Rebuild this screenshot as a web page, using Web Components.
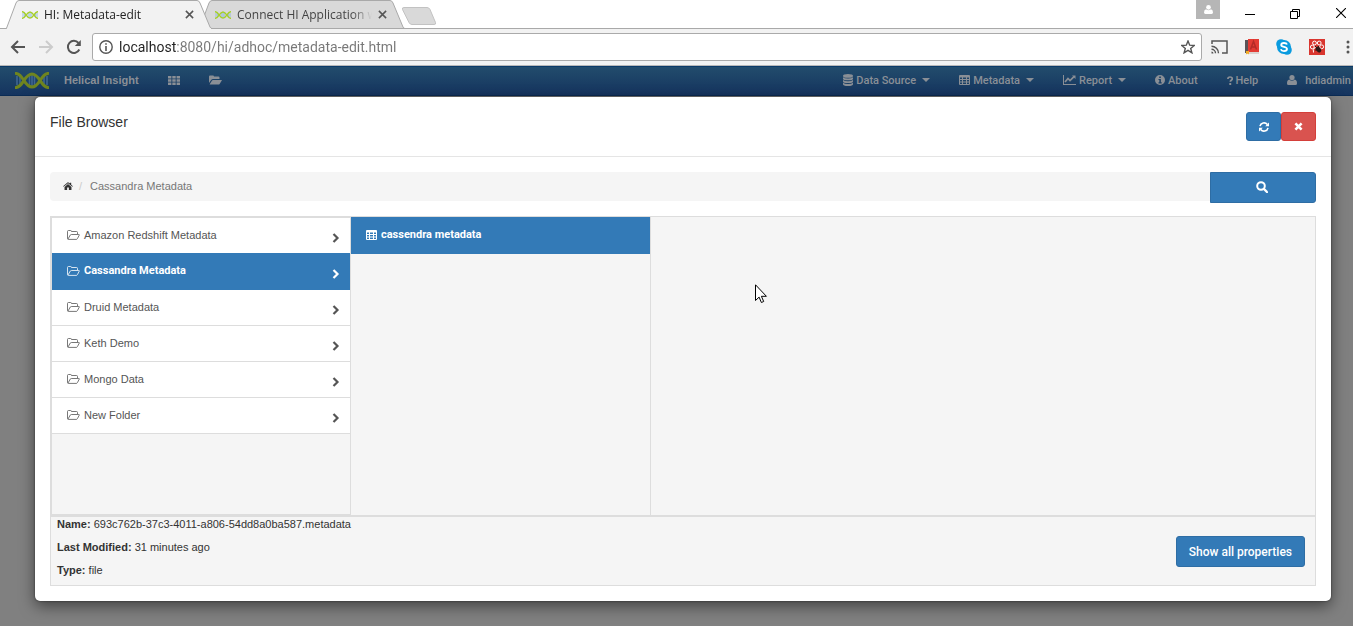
<!DOCTYPE html>
<html lang="en">
<head>
<meta charset="utf-8">
<title>HI: Metadata-edit</title>
<style>
  body {
    margin: 0;
    min-height: 100vh;
    background: #808080;
    font-family: "Liberation Sans", Arial, sans-serif;
    font-size: 11px;
    color: #333;
    display: flex;
    flex-direction: column;
    overflow: hidden;
  }
</style>
</head>
<body>
<browser-window>
  <browser-tab slot="tabs" active icon="dna">HI: Metadata-edit</browser-tab>
  <browser-tab slot="tabs" icon="dna">Connect HI Application with Cassandra</browser-tab>
</browser-window>
<app-navbar>
  <nav-item icon="database" caret>Data Source</nav-item>
  <nav-item icon="table" caret>Metadata</nav-item>
  <nav-item icon="chart" caret>Report</nav-item>
  <nav-item icon="info">About</nav-item>
  <nav-item icon="question">Help</nav-item>
  <nav-item icon="user" wide>hdiadmin</nav-item>
</app-navbar>
<file-browser heading="File Browser">
  <path-bar slot="path">Cassandra Metadata</path-bar>
  <file-column slot="columns" framed>
    <file-item icon="folder" arrow>Amazon Redshift Metadata</file-item>
    <file-item icon="folder" arrow selected>Cassandra Metadata</file-item>
    <file-item icon="folder" arrow>Druid Metadata</file-item>
    <file-item icon="folder" arrow>Keth Demo</file-item>
    <file-item icon="folder" arrow>Mongo Data</file-item>
    <file-item icon="folder" arrow>New Folder</file-item>
  </file-column>
  <file-column slot="columns">
    <file-item icon="table" selected>cassendra metadata</file-item>
  </file-column>
  <file-details slot="details" name="693c762b-37c3-4011-a806-54dd8a0ba587.metadata" modified="31 minutes ago" type="file"></file-details>
</file-browser>
<mouse-pointer></mouse-pointer>

<script>
  const ICONS = {
    dna: ['0 0 34 17', `
      <path d="M2 4v9M5 5v7M14.500 4v9M17 3v11M19.500 4v9M29 5v7M32 4v9" stroke="var(--rung, #8ab6dd)" stroke-width="1.600" fill="none"/>
      <path d="M0 1.500c8-1 9 13.500 17 13.500S26 .5 34 1.500" stroke="var(--strand, #a6cf2a)" stroke-width="3" fill="none"/>
      <path d="M0 15.500c8 1 9-13.500 17-13.500s9 14.500 17 13.500" stroke="var(--strand, #a6cf2a)" stroke-width="3" fill="none"/>`],
    grid: ['0 0 12 9', '<path d="M0 0h3.400v2.500H0zM4.300 0h3.400v2.500H4.300zM8.600 0H12v2.500H8.600zM0 3.200h3.400v2.600H0zM4.300 3.200h3.400v2.600H4.300zM8.600 3.200H12v2.600H8.600zM0 6.500h3.400V9H0zM4.300 6.500h3.400V9H4.300zM8.600 6.500H12V9H8.600z"/>'],
    folderOpen: ['0 0 13 10', '<path d="M0 8V1.5Q0 .5 1 .5h3q1 0 1 1h4.500q1 0 1 1V4H4Q3 4 2.300 4.800zM.6 9.500L3 5.600Q3.400 5 4 5h8.500q.7 0 .3.600L10.600 9q-.4.600-1.200.600z"/>'],
    database: ['0 0 10 12', '<ellipse cx="5" cy="1.900" rx="5" ry="1.900"/><path d="M0 3.200q1.500 1.300 5 1.300t5-1.300v1.500q0 1.600-5 1.600t-5-1.600zM0 6q1.500 1.300 5 1.300T10 6v1.500q0 1.600-5 1.600T0 7.500zM0 8.800q1.500 1.300 5 1.300t5-1.300v1.400q0 1.800-5 1.800t-5-1.800z"/>'],
    table: ['0 0 11 10', '<path fill-rule="evenodd" d="M1 0h9q1 0 1 1v8q0 1-1 1H1q-1 0-1-1V1q0-1 1-1zM1 2.500v1.500h2V2.500zM4 2.500v1.500h3V2.500zM8 2.500v1.500h2V2.500zM1 5v1.500h2V5zM4 5v1.500h3V5zM8 5v1.500h2V5zM1 7.500V9h2V7.500zM4 7.500V9h3V7.500zM8 7.500V9h2V7.500z"/>'],
    chart: ['0 0 13 10', '<path d="M0 0h1v9h12v1H0z"/><path d="M2 7l3-3.500 2 2L11 1.600" fill="none" stroke="currentColor" stroke-width="1.700"/><path d="M9 .5h3.500V4z"/>'],
    info: ['0 0 10 10', '<path fill-rule="evenodd" d="M5 0a5 5 0 1 0 0 10A5 5 0 1 0 5 0zM4.200 1.400h1.700v1.500H4.200zM3.500 3.900h2.400v3.300h.8v1.200H3.500V7.200h.8V5h-.8z"/>'],
    question: ['0 0 6 9', '<path d="M.9 3q0-2 2.200-2t2.200 1.700c0 1.500-2 1.500-2 3" fill="none" stroke="currentColor" stroke-width="1.700"/><path d="M2.300 7h1.900v2H2.300z"/>'],
    user: ['0 0 10 10', '<circle cx="5" cy="2.600" r="2.600"/><path d="M2.300 4.600Q5 7 7.700 4.600 10 5 10 8.400 10 10 8.500 10h-7Q0 10 0 8.400 0 5 2.300 4.600z"/>'],
    home: ['0 0 11 9', '<path d="M0 4.700L4.900.500q.6-.5 1.200 0L7.500 1.700V.8h1.600V3L11 4.700l-.6.700-4.900-4-4.900 4z"/><path d="M5.500 2.300L9.400 5.500V9H6.500V6.200h-2V9H1.600V5.500z"/>'],
    folder: ['0 0 13 10', '<path d="M.5 8.500v-7q0-1 1-1h2q1 0 1 1h5q1 0 1 1V4M1 9L3.300 5Q3.700 4.500 4.300 4.500h7.500q.8 0 .4.700L10.500 8.500q-.4.900-1.200.9H1.300q-.8 0-.8-.9" fill="none" stroke="currentColor" stroke-width=".8"/>'],
    refresh: ['0 0 10 10', '<path d="M1 4.200A4.100 4.100 0 0 1 8.300 2.500M9 5.800A4.100 4.100 0 0 1 1.700 7.500" fill="none" stroke="currentColor" stroke-width="1.600"/><path d="M10 .5v3.800H6.200zM0 9.500V5.700h3.800z"/>'],
    times: ['0 0 9 9', '<path d="M1.400 1.400l6.200 6.200M7.600 1.400L1.400 7.600" stroke="currentColor" stroke-width="2.600"/>'],
    search: ['0 0 12 12', '<circle cx="5" cy="5" r="3.800" fill="none" stroke="currentColor" stroke-width="2"/><path d="M8 8l3 3" stroke="currentColor" stroke-width="2.400" stroke-linecap="round"/>'],
    chevron: ['0 0 8 10', '<path d="M1.500 1l4 4-4 4" fill="none" stroke="currentColor" stroke-width="2.200"/>'],
    close: ['0 0 10 10', '<path d="M1 1l8 8M9 1L1 9" stroke="currentColor" stroke-width="1.700"/>'],
    back: ['0 0 16 14', '<path d="M15 7H2M8 1L2 7l6 6" fill="none" stroke="currentColor" stroke-width="2"/>'],
    forward: ['0 0 16 14', '<path d="M1 7h13M8 1l6 6-6 6" fill="none" stroke="currentColor" stroke-width="2"/>'],
    reload: ['0 0 16 16', '<path d="M13.300 10.500A6 6 0 1 1 12.500 4" fill="none" stroke="currentColor" stroke-width="2"/><path d="M14.800 1v6h-6z"/>'],
    site: ['0 0 14 14', '<circle cx="7" cy="7" r="6.200" fill="none" stroke="currentColor" stroke-width="1.400"/><path d="M6.200 3.200h1.600v1.600H6.200zM6.200 6h1.600v5H6.200z"/>'],
    star: ['0 0 14 14', '<path d="M7 1l1.700 4.200 4.500.3-3.500 2.900 1.200 4.400L7 10.400l-3.900 2.400 1.200-4.400L.8 5.500l4.500-.3z" fill="none" stroke="currentColor" stroke-width="1.400"/>'],
    cast: ['0 0 17 14', '<path d="M1 4V1h15v12h-5" fill="none" stroke="currentColor" stroke-width="1.500"/><path d="M.5 6.200a7 7 0 0 1 7 7M.5 9.200a4 4 0 0 1 4 4" fill="none" stroke="currentColor" stroke-width="1.400"/><path d="M.5 11.500a2 2 0 0 1 2 2h-2z"/>'],
    book: ['0 0 14 16', '<path d="M0 1h3v13H0z" fill="#5b5357"/><path d="M3 0h11v13H3z" fill="#e33b34"/><path d="M5.500 10.500l3-8 3 8M6.800 8h3.500" fill="none" stroke="#b42b28" stroke-width="1.500"/><path d="M1 13h13v2H1z" fill="#d9d2cf"/><path d="M1 12h3v3.500l-1.500-1L1 15.500z" fill="#f2ad26"/>'],
    skype: ['0 0 16 16', '<circle cx="5" cy="5" r="4.800" fill="#0a9bdf"/><circle cx="11" cy="11" r="4.800" fill="#0a9bdf"/><circle cx="8" cy="8" r="7" fill="#0a9bdf"/><path d="M11 5.600Q10.500 4 8 4 5.200 4 5.200 6q0 1.300 2.800 1.900 3 .6 3 2.200 0 2-3 2-2.600 0-3.200-1.800" fill="none" stroke="#fff" stroke-width="1.800"/>'],
    paw: ['0 0 16 16', '<path d="M0 0h16v16H0z" fill="#d9362f"/><circle cx="5.500" cy="4" r="1.900" fill="none" stroke="#fff"/><circle cx="10.200" cy="4" r="1.900" fill="none" stroke="#fff"/><circle cx="3.300" cy="8" r="1.900" fill="none" stroke="#fff"/><circle cx="12.700" cy="7.800" r="1.900" fill="none" stroke="#fff"/><path d="M4.500 13.500q-1.500-3 2-5.500" fill="none" stroke="#fff"/><ellipse cx="9.500" cy="10.500" rx="2.200" ry="3.200" transform="rotate(-40 9.500 10.500)" fill="#2b1a18"/><path d="M6 7l3 3M6 11h3M9.500 7v3" stroke="#2b1a18"/>'],
    dots: ['0 0 4 14', '<circle cx="2" cy="2" r="1.500"/><circle cx="2" cy="7" r="1.500"/><circle cx="2" cy="12" r="1.500"/>'],
    minimize: ['0 0 10 11', '<path d="M0 6h10v1H0z"/>'],
    restore: ['0 0 10 11', '<path d="M.5 3.500h7v7h-7zM2.500 3V1.500h7v7H8" fill="none" stroke="currentColor"/>'],
    exit: ['0 0 10 10', '<path d="M0 0l10 10M10 0L0 10" stroke="currentColor" stroke-width="1.100"/>'],
  };

  class UiElement extends HTMLElement {
    connectedCallback() {
      if (this.shadowRoot) return;
      this.attachShadow({ mode: 'open' });
      this.shadowRoot.innerHTML = this.render();
    }
  }

  class UiIcon extends UiElement {
    render() {
      const [box, body] = ICONS[this.getAttribute('name')];
      const size = box.split(' ');
      const width = this.getAttribute('width') || size[2];
      const height = Math.round(width * size[3] / size[2]);
      return `
        <style>
          :host { display: inline-flex; flex: none; }
          svg { display: block; fill: currentColor; }
        </style>
        <svg width="${width}" height="${height}" viewBox="${box}" aria-hidden="true">${body}</svg>
      `;
    }
  }
  customElements.define('ui-icon', UiIcon);

  class BrowserTab extends UiElement {
    render() {
      return `
        <style>
          :host {
            display: flex;
            align-items: center;
            position: relative;
            box-sizing: border-box;
            width: 206px;
            height: 29px;
            margin-right: -13px;
            padding: 0 18px 0 16px;
            gap: 6px;
            color: #444;
            --body: #d9d9d9;
          }
          :host([active]) { z-index: 1; color: #222; --body: #f2f2f2; }
          .shape { position: absolute; inset: 0; width: 100%; height: 100%; z-index: -1; }
          .shape path { fill: var(--body); stroke: #a9a9a9; }
          :host([active]) .base { stroke: var(--body); }
          .title {
            flex: 1;
            overflow: hidden;
            white-space: nowrap;
            -webkit-mask-image: linear-gradient(90deg, #000 85%, transparent);
            mask-image: linear-gradient(90deg, #000 85%, transparent);
          }
          button { display: flex; border: 0; padding: 0; background: none; color: #555; }
        </style>
        <svg class="shape" viewBox="0 0 206 29" preserveAspectRatio="none">
          <path d="M0 28.500Q.500 28.500 1 27L10 3Q11 .5 13 .5h178q2 0 3 2.500l10 24q.6 1.500 2 1.500"/>
          <path class="base" d="M1 28.500h204"/>
        </svg>
        <ui-icon name="${this.getAttribute('icon')}" width="16"></ui-icon>
        <span class="title"><slot></slot></span>
        <button aria-label="Close tab"><ui-icon name="close" width="9"></ui-icon></button>
      `;
    }
  }
  customElements.define('browser-tab', BrowserTab);

  class BrowserWindow extends UiElement {
    render() {
      return `
        <style>
          :host { display: block; background: #f2f2f2; font-family: "Open Sans", sans-serif; border-bottom: 1px solid #b8b8b8; }
          button { display: flex; border: 0; padding: 0; background: none; color: inherit; }
          .strip {
            display: flex;
            justify-content: space-between;
            height: 29px;
            background: linear-gradient(#fff, #fff) 0 0 / 100% 28px no-repeat #a9a9a9;
            font-size: 12px;
          }
          .tabs { display: flex; padding-left: 6px; isolation: isolate; }
          .new { margin: 7px 0 0 9px; align-self: flex-start; }
          .controls { display: flex; color: #000; gap: 25px; padding-right: 7px; }
          .controls button { align-items: center; height: 26px; }
          .controls .person {
            width: 24px;
            height: 19px;
            justify-content: center;
            background: #b6b6b6;
            color: #fff;
          }
          .controls .restore { margin: 0 11px 0 10px; }
          .toolbar {
            display: flex;
            align-items: center;
            height: 36px;
            padding: 0 3px 0 10px;
            color: #555;
          }
          .history { display: flex; align-items: center; gap: 12px; }
          .history button:disabled { color: #ccc; }
          .extensions { display: flex; align-items: center; gap: 17px; }
          .menu { margin-left: 21px; }
          .omnibox {
            flex: 1;
            display: flex;
            align-items: center;
            gap: 6px;
            height: 26px;
            margin: 0 9px 0 10px;
            padding: 0 6px;
            border: 1px solid #aaa;
            border-radius: 3px;
            background: #fff;
          }
          input {
            flex: 1;
            border: 0;
            padding: 0;
            outline: 0;
            font: 14px Roboto, sans-serif;
            color: #777;
            background: linear-gradient(90deg, #222 57px, #777 57px);
            -webkit-background-clip: text;
            background-clip: text;
            -webkit-text-fill-color: transparent;
          }
        </style>
        <div class="strip">
          <div class="tabs">
            <slot name="tabs"></slot>
            <button class="new" aria-label="New tab">
              <svg width="36" height="18" viewBox="0 0 36 18"><path d="M3 .5h23q2 0 3 2l5.500 13q.8 2-1.500 2H11q-2 0-3-2L1.500 2.500Q.8.500 3 .5z" fill="#d9d9d9" stroke="#c2c2c2"/></svg>
            </button>
          </div>
          <div class="controls">
            <button class="person" aria-label="Profile"><ui-icon name="user" width="9"></ui-icon></button>
            <button aria-label="Minimize"><ui-icon name="minimize"></ui-icon></button>
            <button class="restore" aria-label="Restore"><ui-icon name="restore"></ui-icon></button>
            <button aria-label="Close"><ui-icon name="exit"></ui-icon></button>
          </div>
        </div>
        <div class="toolbar">
          <div class="history">
            <button aria-label="Back"><ui-icon name="back"></ui-icon></button>
            <button aria-label="Forward" disabled><ui-icon name="forward"></ui-icon></button>
            <button aria-label="Reload"><ui-icon name="reload"></ui-icon></button>
          </div>
          <div class="omnibox">
            <ui-icon name="site"></ui-icon>
            <input type="text" aria-label="Address" spellcheck="false" value="localhost:8080/hi/adhoc/metadata-edit.html">
            <button aria-label="Bookmark"><ui-icon name="star"></ui-icon></button>
          </div>
          <div class="extensions">
            <button aria-label="Cast"><ui-icon name="cast"></ui-icon></button>
            <button aria-label="Dictionary"><ui-icon name="book"></ui-icon></button>
            <button aria-label="Skype"><ui-icon name="skype"></ui-icon></button>
            <button aria-label="Extension"><ui-icon name="paw"></ui-icon></button>
          </div>
          <button class="menu" aria-label="Menu"><ui-icon name="dots"></ui-icon></button>
        </div>
      `;
    }
  }
  customElements.define('browser-window', BrowserWindow);

  class NavItem extends UiElement {
    render() {
      return `
        <style>
          :host { font-family: Roboto, sans-serif; font-weight: 500; }
          a { display: flex; align-items: center; gap: 3px; color: inherit; text-decoration: none; white-space: nowrap; }
          :host([wide]) a { gap: 8px; }
          .caret { margin-left: 3px; border: 4px solid transparent; border-top-color: currentColor; border-bottom: 0; }
        </style>
        <a href="#">
          <ui-icon name="${this.getAttribute('icon')}"></ui-icon>
          <slot></slot>
          ${this.hasAttribute('caret') ? '<span class="caret"></span>' : ''}
        </a>
      `;
    }
  }
  customElements.define('nav-item', NavItem);

  class AppNavbar extends UiElement {
    render() {
      return `
        <style>
          :host {
            display: block;
            color: #8a8f96;
            font-weight: bold;
            background: linear-gradient(#224c6c, #15345f);
            border-top: 1px solid #0b3a68;
            border-bottom: 1px solid #0b2c55;
          }
          nav { display: flex; align-items: center; height: 26px; padding: 0 2px 2px 15px; }
          .brand { display: flex; align-items: center; gap: 15px; --strand: #6f851f; --rung: #3f6692; }
          .links { display: flex; gap: 29px; margin-left: auto; }
          a { color: inherit; text-decoration: none; white-space: nowrap; }
          .tool { display: flex; margin-left: 29px; }
        </style>
        <nav>
          <a class="brand" href="#"><ui-icon name="dna"></ui-icon><span>Helical Insight</span></a>
          <a class="tool" href="#" aria-label="Dashboard"><ui-icon name="grid"></ui-icon></a>
          <a class="tool" href="#" aria-label="Open"><ui-icon name="folderOpen"></ui-icon></a>
          <div class="links"><slot></slot></div>
        </nav>
      `;
    }
  }
  customElements.define('app-navbar', AppNavbar);

  class PathBar extends UiElement {
    render() {
      return `
        <style>
          :host { display: flex; align-items: flex-start; }
          nav {
            flex: 1;
            display: flex;
            align-items: center;
            gap: 6px;
            height: 27px;
            padding: 0 0 2px 13px;
            background: #f5f5f5;
            border-radius: 4px 0 0 4px;
            color: #777;
          }
          a { display: flex; color: #333; }
          .sep { color: #ccc; margin-right: 2px; }
          button {
            display: flex;
            align-items: center;
            justify-content: center;
            width: 106px;
            height: 31px;
            padding: 0 2px 2px 0;
            border: 1px solid #2e6da4;
            border-radius: 0 3px 3px 0;
            background: #337ab7;
            color: #fff;
          }
        </style>
        <nav aria-label="Path">
          <a href="#" aria-label="Home"><ui-icon name="home" width="10"></ui-icon></a>
          <span class="sep">/</span>
          <span><slot></slot></span>
        </nav>
        <button aria-label="Search"><ui-icon name="search"></ui-icon></button>
      `;
    }
  }
  customElements.define('path-bar', PathBar);

  class FileItem extends UiElement {
    render() {
      return `
        <style>
          :host { display: block; border-bottom: 1px solid #ddd; background: #fff; color: #555; }
          :host([selected]) {
            margin-top: -1px;
            border-top: 1px solid #337ab7;
            border-bottom-color: #337ab7;
            background: #337ab7;
            color: #fff;
            font-family: Roboto, sans-serif;
            font-weight: bold;
          }
          a {
            display: flex;
            align-items: center;
            gap: 4px;
            height: 33px;
            padding: 0 10px 2px 15px;
            color: inherit;
            text-decoration: none;
          }
          .arrow { margin-left: auto; padding-top: 7px; }
        </style>
        <a href="#">
          <ui-icon name="${this.getAttribute('icon')}"></ui-icon>
          <slot></slot>
          ${this.hasAttribute('arrow') ? '<ui-icon class="arrow" name="chevron"></ui-icon>' : ''}
        </a>
      `;
    }
  }
  customElements.define('file-item', FileItem);

  class FileColumn extends UiElement {
    render() {
      return `
        <style>
          :host { display: block; box-sizing: border-box; width: 300px; padding-top: 1px; border-right: 1px solid #ddd; }
          :host([framed]) { padding: 0; border: 1px solid #ddd; }
        </style>
        <slot></slot>
      `;
    }
  }
  customElements.define('file-column', FileColumn);

  class FileDetails extends UiElement {
    render() {
      return `
        <style>
          :host {
            display: flex;
            align-items: center;
            justify-content: space-between;
            padding: 0 10px 7px 6px;
            border: 1px solid #ddd;
            border-top-width: 2px;
            background: #f5f5f5;
          }
          dl { display: grid; gap: 8px; margin: 0; line-height: 15px; }
          dt, dd { display: inline; margin: 0; }
          dt { font-weight: bold; }
          button {
            height: 31px;
            margin-top: 8px;
            padding: 0 12px;
            border: 1px solid #2e6da4;
            border-radius: 3px;
            background: #337ab7;
            color: #fff;
            font: 500 12px Roboto, sans-serif;
          }
        </style>
        <dl>
          <div><dt>Name:</dt> <dd>${this.getAttribute('name')}</dd></div>
          <div><dt>Last Modified:</dt> <dd>${this.getAttribute('modified')}</dd></div>
          <div><dt>Type:</dt> <dd>${this.getAttribute('type')}</dd></div>
        </dl>
        <button>Show all properties</button>
      `;
    }
  }
  customElements.define('file-details', FileDetails);

  class FileBrowser extends UiElement {
    render() {
      return `
        <style>
          :host {
            display: block;
            margin: 1px 22px 0 35px;
            border-radius: 5px;
            background: #fff;
            box-shadow: 0 5px 15px rgba(0, 0, 0, .5), 0 0 2px rgba(0, 0, 0, .6);
          }
          header {
            display: flex;
            align-items: flex-start;
            justify-content: space-between;
            padding: 15px;
            border-bottom: 1px solid #e5e5e5;
          }
          h4 { margin: 0; font-size: 14px; font-weight: normal; line-height: 20px; }
          .actions { display: flex; height: 29px; }
          .actions button {
            display: flex;
            align-items: center;
            justify-content: center;
            width: 35px;
            padding: 0;
            border: 1px solid #2e6da4;
            border-radius: 3px;
            background: #337ab7;
            color: #fff;
          }
          .actions .danger { background: #d9534f; border-color: #d43f3a; }
          section { padding: 15px; }
          .columns {
            display: flex;
            height: 298px;
            margin-top: 13px;
            border: 1px solid #ddd;
            border-bottom: 0;
            background: #f5f5f5;
          }
        </style>
        <header>
          <h4>${this.getAttribute('heading')}</h4>
          <div class="actions">
            <button aria-label="Refresh"><ui-icon name="refresh"></ui-icon></button>
            <button class="danger" aria-label="Close"><ui-icon name="times"></ui-icon></button>
          </div>
        </header>
        <section>
          <slot name="path"></slot>
          <div class="columns"><slot name="columns"></slot></div>
          <slot name="details"></slot>
        </section>
      `;
    }
  }
  customElements.define('file-browser', FileBrowser);

  class MousePointer extends UiElement {
    render() {
      return `
        <style>:host { position: absolute; left: 755px; top: 284px; pointer-events: none; }</style>
        <svg width="13" height="20" viewBox="0 0 13 20"><path d="M.5.800v15.700l3.600-3.400 2.300 5.400 2.300-1-2.300-5.200h5z" fill="#fff" stroke="#000"/></svg>
      `;
    }
  }
  customElements.define('mouse-pointer', MousePointer);
</script>
</body>
</html>
